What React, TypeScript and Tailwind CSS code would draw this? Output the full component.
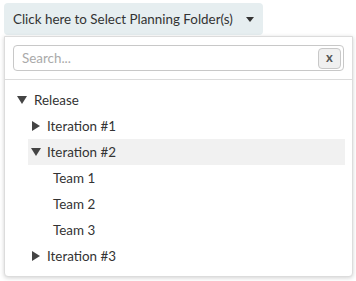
import React, { useState } from 'react';

type Node = { label: string; level: number; caret?: 'open' | 'closed'; active?: boolean };

const rows: Node[] = [
  { label: 'Release', level: 0, caret: 'open' },
  { label: 'Iteration #1', level: 1, caret: 'closed' },
  { label: 'Iteration #2', level: 1, caret: 'open', active: true },
  { label: 'Team 1', level: 2 },
  { label: 'Team 2', level: 2 },
  { label: 'Team 3', level: 2 },
  { label: 'Iteration #3', level: 1, caret: 'closed' },
];

const Caret: React.FC<{ open: boolean }> = ({ open }) => (
  <svg width="10" height="10" viewBox="0 0 10 10" className="shrink-0 fill-[#444]">
    {open ? <polygon points="0,1 10,1 5,9" /> : <polygon points="1,0 9,5 1,10" />}
  </svg>
);

const App: React.FC = () => {
  const [query, setQuery] = useState('');

  return (
    <div className="w-[356px] h-[281px] bg-white font-['Lato',sans-serif] text-[#333] pt-[3px] pl-1">
      <button className="flex items-center h-8 w-[259px] pl-[9px] pr-2 bg-[#e6eef0] rounded text-[13.4px] text-[#333]">
        <span>Click here to Select Planning Folder(s)</span>
        <svg width="8" height="5" viewBox="0 0 8 5" className="ml-auto mr-[1px] fill-[#333]">
          <polygon points="0,0 8,0 4,5" />
        </svg>
      </button>

      <div className="w-[349px] h-[241px] mt-px border border-[#dcdcdc] rounded-b shadow-[0_1px_4px_rgba(0,0,0,0.18)] bg-white">
        <div className="px-2 pt-2 pb-2 border-b border-[#dcdcdc]">
          <div className="flex items-center h-[26px] border border-[#c8c8c8] rounded-sm pr-[2px]">
            <input
              value={query}
              onChange={(e) => setQuery(e.target.value)}
              placeholder="Search..."
              className="flex-1 min-w-0 h-full pl-2 text-[13.4px] outline-none placeholder:text-[#aaa] bg-transparent"
            />
            <button className="w-[23px] h-[21px] bg-[#f0f0f0] border border-[#c8c8c8] rounded-sm text-[13px] font-bold text-[#555] leading-none pb-px">
              x
            </button>
          </div>
        </div>

        <ul className="pt-[7px] pl-[11px] pr-[7px]">
          {rows.map((r) => (
            <li
              key={r.label}
              className={`flex items-center h-[26px] gap-[6px] text-[13.4px] ${r.active ? 'bg-[#f1f1f1]' : ''} ${
                r.level === 0 ? 'pl-[1px] gap-[7px]' : r.level === 1 ? 'ml-[12px] pl-[3px]' : 'ml-[12px] pl-[25px]'
              }`}
            >
              {r.caret && <Caret open={r.caret === 'open'} />}
              <span>{r.label}</span>
            </li>
          ))}
        </ul>
      </div>
    </div>
  );
};

export default App;
